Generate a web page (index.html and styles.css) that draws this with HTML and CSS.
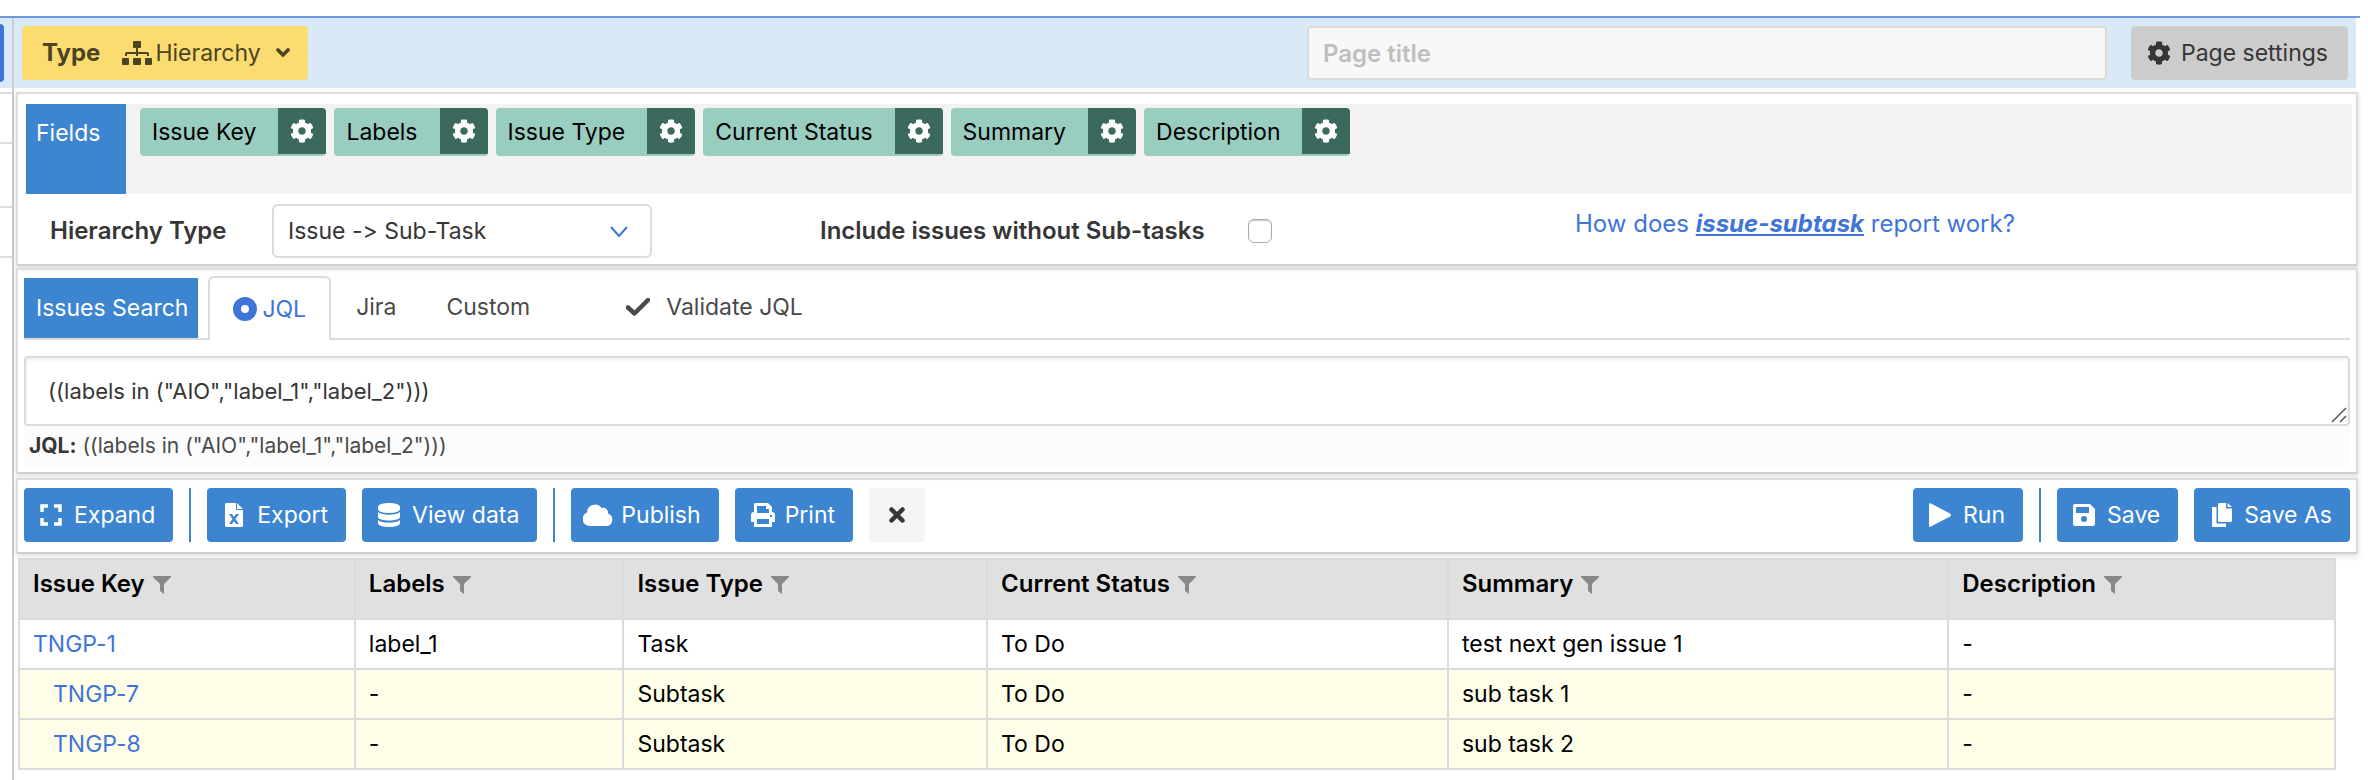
FILE: index.html
```
<!DOCTYPE html>
<html lang="en">
<head>
    <meta charset="UTF-8">
    <meta name="viewport" content="width=device-width, initial-scale=1.0">
    <title>Hierarchy report</title>
    <link rel="stylesheet" href="styles.css">
</head>
<body>
    <!-- shared icons -->
    <svg class="sprite" aria-hidden="true">
        <symbol id="i-cog" viewBox="0 0 512 512"><path d="M487.4 315.7l-42.6-24.6c4.3-23.2 4.3-47 0-70.2l42.6-24.6c4.9-2.8 7.1-8.6 5.5-14-11.1-35.6-30-67.8-54.7-94.6-3.8-4.1-10-5.1-14.8-2.3L380.8 110c-17.9-15.4-38.5-27.3-60.8-35.1V25.8c0-5.6-3.9-10.5-9.4-11.7-36.7-8.2-74.3-7.8-109.2 0-5.5 1.2-9.4 6.1-9.4 11.7V75c-22.2 7.9-42.8 19.8-60.8 35.1L88.7 85.5c-4.9-2.8-11-1.9-14.8 2.3-24.7 26.7-43.6 58.9-54.7 94.6-1.7 5.4.6 11.2 5.5 14L67.3 221c-4.3 23.2-4.3 47 0 70.2l-42.6 24.6c-4.9 2.8-7.1 8.6-5.5 14 11.1 35.6 30 67.8 54.7 94.6 3.8 4.1 10 5.1 14.8 2.3l42.6-24.6c17.9 15.4 38.5 27.3 60.8 35.1v49.2c0 5.6 3.9 10.5 9.4 11.7 36.7 8.2 74.3 7.8 109.2 0 5.5-1.2 9.4-6.1 9.4-11.7v-49.2c22.2-7.9 42.8-19.8 60.8-35.1l42.6 24.6c4.9 2.8 11 1.9 14.8-2.3 24.7-26.7 43.6-58.9 54.7-94.6 1.5-5.5-.7-11.3-5.6-14.1zM256 336c-44.1 0-80-35.9-80-80s35.9-80 80-80 80 35.9 80 80-35.9 80-80 80z"/></symbol>
        <symbol id="i-filter" viewBox="0 0 18 18"><path d="M0 0h18v1l-7 7v10l-4-3V8L0 1z"/></symbol>
    </svg>

    <div class="layout">
        <aside class="side">
            <div class="side-top"><button class="side-btn" aria-label="Pages"></button></div>
            <div class="side-row"></div>
            <div class="side-row tall"></div>
            <div class="side-row"></div>
        </aside>

        <main class="main">
            <header class="topbar">
                <button class="btn type-btn">
                    <strong>Type</strong>
                    <svg class="sitemap" viewBox="0 0 30 24"><path d="M12 0h6a1 1 0 0 1 1 1v5a1 1 0 0 1-1 1h-2v4h9a2 2 0 0 1 2 2v2h-2v-2h-9v2h-2v-2H5v2H3v-2a2 2 0 0 1 2-2h9V7h-2a1 1 0 0 1-1-1V1a1 1 0 0 1 1-1zM1 17h5a1 1 0 0 1 1 1v5a1 1 0 0 1-1 1H1a1 1 0 0 1-1-1v-5a1 1 0 0 1 1-1zM12 17h6a1 1 0 0 1 1 1v5a1 1 0 0 1-1 1h-6a1 1 0 0 1-1-1v-5a1 1 0 0 1 1-1zM24 17h5a1 1 0 0 1 1 1v5a1 1 0 0 1-1 1h-5a1 1 0 0 1-1-1v-5a1 1 0 0 1 1-1z"/></svg>
                    <span>Hierarchy</span>
                    <svg class="caret" viewBox="0 0 14 10"><path d="M2 2l5 5 5-5" fill="none" stroke="currentColor" stroke-width="3.6" stroke-linecap="round"/></svg>
                </button>
                <input class="page-title" type="text" placeholder="Page title" aria-label="Page title">
                <button class="btn settings-btn"><svg class="icon"><use href="#i-cog"/></svg>Page settings</button>
            </header>

            <section class="panel fields-panel">
                <div class="fields">
                    <div class="fields-label">Fields</div>
                    <div class="chips">
                        <div class="chip"><span>Issue Key</span><button aria-label="Issue Key settings"><svg class="icon"><use href="#i-cog"/></svg></button></div>
                        <div class="chip"><span>Labels</span><button aria-label="Labels settings"><svg class="icon"><use href="#i-cog"/></svg></button></div>
                        <div class="chip"><span>Issue Type</span><button aria-label="Issue Type settings"><svg class="icon"><use href="#i-cog"/></svg></button></div>
                        <div class="chip"><span>Current Status</span><button aria-label="Current Status settings"><svg class="icon"><use href="#i-cog"/></svg></button></div>
                        <div class="chip"><span>Summary</span><button aria-label="Summary settings"><svg class="icon"><use href="#i-cog"/></svg></button></div>
                        <div class="chip"><span>Description</span><button aria-label="Description settings"><svg class="icon"><use href="#i-cog"/></svg></button></div>
                    </div>
                </div>
                <div class="options">
                    <label class="type-label" for="hierarchyType">Hierarchy Type</label>
                    <div class="select-wrap">
                        <select id="hierarchyType">
                            <option>Issue -&gt; Sub-Task</option>
                        </select>
                        <svg viewBox="0 0 18 12"><path d="M1 1l8 9 8-9" fill="none" stroke="currentColor" stroke-width="2"/></svg>
                    </div>
                    <label class="include-label" for="includeAll">Include issues without Sub-tasks</label>
                    <input class="include-check" type="checkbox" id="includeAll">
                    <a class="help" href="#">How does <em>issue-subtask</em> report work?</a>
                </div>
            </section>

            <section class="panel search-panel">
                <div class="tabs">
                    <div class="tabs-label">Issues Search</div>
                    <button class="tab active"><svg viewBox="0 0 24 24"><circle cx="12" cy="12" r="8" fill="none" stroke="currentColor" stroke-width="8"/></svg>JQL</button>
                    <button class="tab">Jira</button>
                    <button class="tab">Custom</button>
                    <button class="tab validate"><svg viewBox="0 0 24 18"><path d="M2 9.5l6.5 6L22 2" fill="none" stroke="currentColor" stroke-width="4.5" stroke-linejoin="round" stroke-linecap="round"/></svg>Validate JQL</button>
                </div>
                <div class="jql-wrap">
                    <textarea class="jql" rows="1" aria-label="JQL query" spellcheck="false">((labels in ("AIO","label_1","label_2")))</textarea>
                    <svg class="grip" viewBox="0 0 16 16"><path d="M1 15L15 1M9 15l6-6" stroke="#555" stroke-width="1.5"/></svg>
                </div>
                <div class="jql-echo"><strong>JQL:</strong> ((labels in ("AIO","label_1","label_2")))</div>
            </section>

            <section class="panel toolbar">
                <button class="btn"><svg class="icon" viewBox="0 0 24 24"><path d="M2 9V3h6M14 3h6v6M20 15v6h-6M8 21H2v-6" fill="none" stroke="currentColor" stroke-width="3.5"/></svg>Expand</button>
                <span class="sep"></span>
                <button class="btn"><svg class="icon" viewBox="0 0 24 24"><path fill-rule="evenodd" d="M3 0h10v7h7v16l-1 1H3l-1-1V1zM6 11l3.5 5L6 21h3l2-3 2 3h3l-3.5-5 3.5-5h-3l-2 3-2-3zM14 0l6 6h-6z"/></svg>Export</button>
                <button class="btn"><svg class="icon" viewBox="0 0 24 24"><path d="M0 4c0-5.3 22-5.3 22 0v2c0 5.300-22 5.300-22 0zM0 9c4 3.5 18 3.5 22 0v5c0 4.600-22 4.600-22 0zM0 17c4 3.5 18 3.5 22 0v3c0 5.300-22 5.300-22 0z"/></svg>View data</button>
                <span class="sep"></span>
                <button class="btn publish"><svg class="icon" viewBox="0 0 30 24"><path d="M7 23A7 7 0 0 1 4 9.5 8 8 0 0 1 18.5 5a5 5 0 0 1 6.500 5.500A6.500 6.500 0 0 1 24 23z"/></svg>Publish</button>
                <button class="btn"><svg class="icon" viewBox="0 0 24 24"><path fill-rule="evenodd" d="M3 9V1l1-1h13l4 4v5q3 0 3 3v7h-3v5H3v-5H0v-7q0-3 3-3zM6 3v7h12V6h-3V3zM6 16v5h12v-5z"/><circle cx="20" cy="13" r="1.2" fill="#3d85d1"/></svg>Print</button>
                <button class="btn close" aria-label="Close"><svg class="cross" viewBox="0 0 16 16"><path d="M2.5 2.5l11 11M13.5 2.5l-11 11" stroke="currentColor" stroke-width="4.5" stroke-linecap="round"/></svg></button>
                <div class="toolbar-right">
                    <button class="btn"><svg class="icon" viewBox="0 0 24 24"><path d="M0 1.5Q0-.5 2 .5l19 10q2 1.5 0 3l-19 10q-2 1-2-1z"/></svg>Run</button>
                    <span class="sep"></span>
                    <button class="btn"><svg class="icon" viewBox="0 0 24 24"><path fill-rule="evenodd" d="M2 1h15l5 5v15a2 2 0 0 1-2 2H2a2 2 0 0 1-2-2V3a2 2 0 0 1 2-2zM3 4v6h13V4zM11 13a3 3 0 1 0 0 6 3 3 0 0 0 0-6z"/></svg>Save</button>
                    <button class="btn"><svg class="icon" viewBox="0 0 24 24"><path d="M2 4h4.5v16.5H16V24H3a1 1 0 0 1-1-1zM9 0h7v5.5h6V18l-1 1H9l-1-1V1zM17.5 0L22 4h-4.5z"/></svg>Save As</button>
                </div>
            </section>

            <table class="issues">
                <thead>
                    <tr>
                        <th class="c-key">Issue Key<svg><use href="#i-filter"/></svg></th>
                        <th class="c-labels">Labels<svg><use href="#i-filter"/></svg></th>
                        <th class="c-type">Issue Type<svg><use href="#i-filter"/></svg></th>
                        <th class="c-status">Current Status<svg><use href="#i-filter"/></svg></th>
                        <th class="c-summary">Summary<svg><use href="#i-filter"/></svg></th>
                        <th>Description<svg><use href="#i-filter"/></svg></th>
                    </tr>
                </thead>
                <tbody>
                    <tr><td><a href="#">TNGP-1</a></td><td>label_1</td><td>Task</td><td>To Do</td><td>test next gen issue 1</td><td>-</td></tr>
                    <tr class="sub"><td><a href="#">TNGP-7</a></td><td>-</td><td>Subtask</td><td>To Do</td><td>sub task 1</td><td>-</td></tr>
                    <tr class="sub"><td><a href="#">TNGP-8</a></td><td>-</td><td>Subtask</td><td>To Do</td><td>sub task 2</td><td>-</td></tr>
                </tbody>
            </table>
        </main>
    </div>
</body>
</html>
```
FILE: styles.css
```
* {
    box-sizing: border-box;
}
body {
    margin: 0;
    padding-top: 16px;
    background: #fff;
    color: #363636;
    font-family: Inter, "Liberation Sans", sans-serif;
    font-size: 23px;
    font-feature-settings: "calt" 0;
    line-height: 30px;
}
button, input, select, textarea {
    font: inherit;
    font-feature-settings: inherit;
    color: inherit;
}
button {
    border: none;
    cursor: pointer;
}
a {
    color: #3f74d8;
    text-decoration: none;
}
svg {
    fill: currentColor;
    flex: none;
}
.sprite {
    display: none;
}
.icon {
    width: 24px;
    height: 24px;
}
.layout {
    display: flex;
    min-height: calc(100vh - 16px);
    margin-right: 8px;
    border-top: 2px solid #7199e1;
}

/* cut-off page list on the left */
.side {
    width: 14px;
    flex: none;
    border-right: 2px solid #ccc;
}
.side-top {
    height: 76px;
    padding-top: 6px;
    background: linear-gradient(#dae9f8 70px, #fff 70px);
    border-bottom: 2px solid #ddd;
}
.side-btn {
    display: block;
    width: 4px;
    height: 58px;
    padding: 0;
    background: #3f74d8;
    border-radius: 0 6px 6px 0;
}
.side-row {
    height: 50px;
    border-bottom: 2px solid #ddd;
}
.side-row.tall {
    height: 64px;
}
.main {
    flex: 1;
    min-width: 0;
}
.btn {
    display: flex;
    align-items: center;
    gap: 10px;
    height: 54px;
    padding: 0 18px 0 16px;
    border-radius: 4px;
    background: #3d85d1;
    color: #fff;
    white-space: nowrap;
}

/* top bar */
.topbar {
    display: flex;
    align-items: center;
    height: 70px;
    margin-right: 4px;
    padding: 0 8px;
    background: #dae9f8;
}
.type-btn {
    gap: 0;
    padding: 0 18px 0 20px;
    background: #fbdc70;
    color: #4b4322;
}
.type-btn strong {
    font-size: 24px;
}
.sitemap {
    width: 30px;
    height: 24px;
    margin: 0 3px 0 22px;
}
.caret {
    width: 14px;
    height: 10px;
    margin-left: 15px;
}
.page-title {
    width: 800px;
    height: 54px;
    margin-left: auto;
    padding: 0 14px;
    border: 2px solid #dbdbdb;
    border-radius: 4px;
    background: #f8f8f8;
    font-size: 24px;
    font-weight: 600;
}
.page-title::placeholder {
    color: #bfbfbf;
}
.settings-btn {
    margin-left: 24px;
    padding-right: 20px;
    background: #ccc;
    color: #363636;
}

/* panels */
.panel {
    margin: 0 2px 4px;
    border: 2px solid #ddd;
    border-bottom-color: #d0d0d0;
    box-shadow: 0 2px 6px rgba(0, 0, 0, 0.14);
}
.fields-panel {
    margin-top: 4px;
    margin-bottom: 2px;
    padding: 10px 4px 6px 8px;
}
.fields {
    display: flex;
    height: 90px;
    background: #f3f3f3;
}
.fields-label {
    width: 100px;
    padding: 14px 10px;
    background: #3d85d1;
    color: #fff;
}
.chips {
    display: flex;
    align-items: flex-start;
    gap: 8px;
    padding: 4px 14px;
    color: #000;
}
.chip {
    display: flex;
    height: 48px;
    overflow: hidden;
    background: #99cdc0;
    border-radius: 4px;
}
.chip span {
    padding: 9px 22px 0 12px;
}
.chip button {
    width: 48px;
    height: 46px;
    padding: 0 12px;
    background: #3b695d;
    color: #fff;
}
.chip .icon {
    display: block;
}
.options {
    display: flex;
    align-items: center;
    margin-top: 10px;
    padding-left: 24px;
}
.type-label, .include-label {
    font-size: 24px;
    font-weight: 600;
}
.type-label {
    width: 222px;
}
.select-wrap {
    position: relative;
    width: 380px;
}
.select-wrap select {
    appearance: none;
    display: block;
    width: 100%;
    height: 54px;
    padding: 0 14px;
    border: 2px solid #dbdbdb;
    border-radius: 6px;
    background: #fff;
}
.select-wrap svg {
    position: absolute;
    top: 22px;
    right: 24px;
    width: 18px;
    height: 12px;
    color: #3f74d8;
    pointer-events: none;
}
.include-label {
    width: 428px;
    margin-left: 168px;
}
.include-check {
    appearance: none;
    width: 24px;
    height: 24px;
    margin: 0;
    border: 1px solid #aaa;
    border-radius: 6px;
    background: #fff;
    box-shadow: inset 0 1px 1px rgba(0, 0, 0, 0.2);
}
.include-check:checked {
    background: #3f74d8;
}
.help {
    margin-left: 303px;
    padding-bottom: 14px;
    font-size: 24px;
}
.help em {
    font-weight: 700;
    text-decoration: underline;
}

/* search */
.search-panel {
    padding: 6px;
}
.tabs {
    display: flex;
    align-items: flex-end;
    height: 64px;
    border-bottom: 2px solid #dbdbdb;
}
.tabs-label {
    height: 60px;
    margin-right: 10px;
    padding: 15px 10px 15px 12px;
    background: #3d85d1;
    color: #fff;
    white-space: nowrap;
}
.tab {
    display: flex;
    align-items: center;
    height: 62px;
    padding: 0 25px;
    background: none;
    color: #4a4a4a;
}
.tab.active {
    gap: 5px;
    height: 64px;
    margin-bottom: -2px;
    padding: 0 23px;
    border: 2px solid #dbdbdb;
    border-bottom: none;
    border-radius: 6px 6px 0 0;
    background: #fff;
    color: #3f74d8;
}
.tab.active svg {
    width: 24px;
    height: 24px;
}
.tab.validate {
    gap: 16px;
    margin-left: 46px;
}
.tab.validate svg {
    width: 24px;
    height: 18px;
}
.jql-wrap {
    position: relative;
    margin-top: 16px;
}
.jql {
    display: block;
    width: 100%;
    height: 70px;
    padding: 18px 22px;
    border: 2px solid #dbdbdb;
    border-radius: 4px;
    box-shadow: inset 0 2px 4px rgba(0, 0, 0, 0.06);
    font-size: 22px;
    resize: none;
    overflow: hidden;
}
.grip {
    position: absolute;
    right: 3px;
    bottom: 3px;
    width: 16px;
    height: 16px;
}
.jql-echo {
    height: 40px;
    padding: 5px;
    background: #fcfcfc;
    color: #4a4a4a;
    font-size: 21px;
}
.jql-echo strong {
    color: #363636;
}

/* toolbar */
.toolbar {
    display: flex;
    gap: 16px;
    padding: 8px 6px 10px;
}
.toolbar-right {
    display: flex;
    gap: 16px;
    margin-left: auto;
}
.sep {
    width: 2px;
    background: #3d85d1;
}
.publish {
    gap: 8px;
    padding-left: 12px;
}
.publish .icon {
    width: 30px;
}
.close {
    padding: 0 20px;
    background: #f5f5f5;
    color: #363636;
}
.cross {
    width: 16px;
    height: 16px;
}

/* results */
.issues {
    width: calc(100% - 28px);
    margin-left: 4px;
    border-collapse: collapse;
    table-layout: fixed;
    color: #000;
}
.issues th, .issues td {
    height: 50px;
    padding: 0 13px;
    border: 2px solid #dbdbdb;
    text-align: left;
}
.issues th {
    height: 60px;
    padding-bottom: 10px;
    background: #e0e0e0;
    font-size: 24px;
    font-weight: 600;
}
.issues th svg {
    width: 18px;
    height: 18px;
    margin-left: 8px;
    color: #888;
    vertical-align: -2px;
}
.issues .sub {
    background: #ffffe9;
}
.issues .sub td:first-child {
    padding-left: 33px;
}
.c-key {
    width: 14.5%;
}
.c-labels {
    width: 11.6%;
}
.c-type {
    width: 15.7%;
}
.c-status {
    width: 19.9%;
}
.c-summary {
    width: 21.6%;
}
```
